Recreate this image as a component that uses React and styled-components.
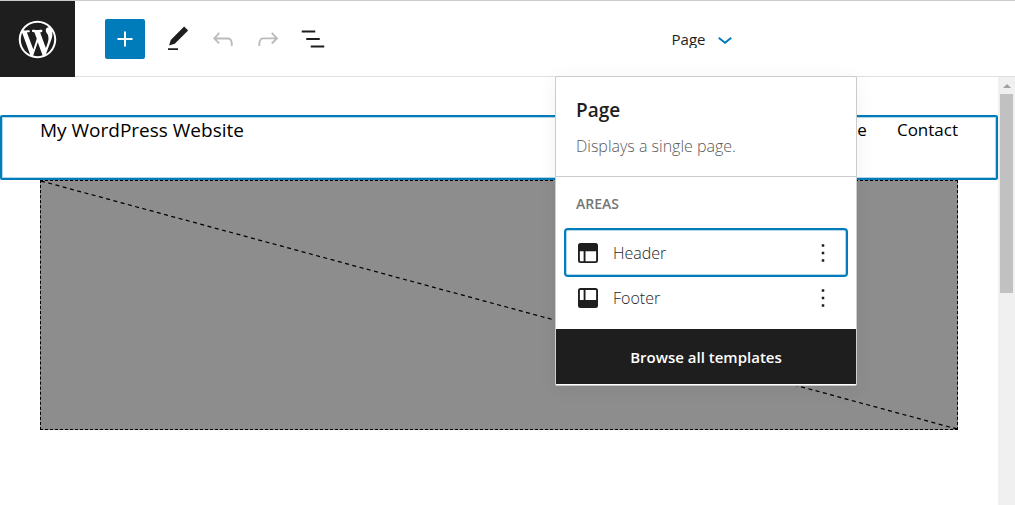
import React from 'react';

// UI
import styled, { createGlobalStyle } from 'styled-components';

const GlobalStyle = createGlobalStyle`
    *, *::before, *::after {
        box-sizing: border-box;
    }
    body {
        margin: 0;
        background: #fff;
        color: #1e1e1e;
        font-family: "Open Sans", "Noto Sans", sans-serif;
        font-size: 15px;
        line-height: 20px;
    }
    button {
        border: 0;
        padding: 0;
        background: none;
        color: inherit;
        font: inherit;
        cursor: pointer;
    }
`;

const Editor = styled.div`
    min-height: 100vh;
    display: flex;
    flex-direction: column;
    border-top: 1px solid #ccc;
`;

const TopBar = styled.header`
    display: flex;
    height: 76px;
    background: linear-gradient(#e0e0e0, #e0e0e0) bottom / 100% 1px no-repeat;
`;

const Logo = styled.a`
    display: flex;
    align-items: center;
    justify-content: center;
    width: 75px;
    background: #1e1e1e;
    color: #fff;
`;

const Tools = styled.div`
    display: flex;
    align-items: center;
    gap: 5px;
    width: 322px;
    padding-left: 30px;
`;

const ToolButton = styled.button`
    display: flex;
    align-items: center;
    justify-content: center;
    width: 40px;
    height: 40px;
    border-radius: 2px;
    &:disabled {
        color: #bbb;
        cursor: default;
    }
`;

const InserterButton = styled(ToolButton)`
    margin-right: 8px;
    background: #007cba;
    color: #fff;
`;

const DocumentActions = styled.div`
    flex: 1;
    display: flex;
    justify-content: center;
    position: relative;
`;

const DocumentButton = styled.button`
    display: flex;
    align-items: center;
    gap: 5px;
    svg {
        color: #007cba;
    }
`;

const DocumentLabel = styled.span`
    height: 18px;
    line-height: 18px;
    overflow: hidden;
`;

// Template details
const Popover = styled.div`
    position: absolute;
    top: 75px;
    left: 50%;
    z-index: 1;
    width: 302px;
    margin-left: -151px;
    padding-bottom: 1px;
    background: #fff;
    border: 1px solid #ccc;
    border-radius: 2px;
    box-shadow: 0 3px 20px rgba(0,0,0,.06);
`;

const Summary = styled.div`
    padding: 20px;
    border-bottom: 1px solid #ccc;
`;

const Title = styled.h2`
    margin: 0 0 12px;
    font-size: 19px;
    font-weight: 600;
    line-height: 27px;
`;

const Description = styled.p`
    margin: 0;
    color: #5a5a5a;
    font-size: 16px;
    font-weight: 300;
`;

const Areas = styled.div`
    padding: 17px 10px 9px;
`;

const AreasTitle = styled.h3`
    margin: 0 10px 16px;
    color: #757575;
    font-size: 14px;
    font-weight: 600;
    line-height: 20px;
    text-transform: uppercase;
`;

const Area = styled.div`
    display: flex;
    align-items: center;
    height: 45px;
    padding: 0 8px 0 7px;
    border-radius: 2px;
    box-shadow: ${props => props.$selected ? '0 0 0 2px #007cba, inset 0 0 0 1px rgba(0,124,186,.3)' : 'none'};
`;

const AreaButton = styled.button`
    flex: 1;
    display: flex;
    align-items: center;
    gap: 10px;
    height: 100%;
    font-size: 16px;
    font-weight: 300;
`;

const MoreButton = styled.button`
    display: flex;
`;

const BrowseButton = styled.button`
    display: block;
    width: 100%;
    height: 55px;
    background: #1e1e1e;
    color: #fff;
    font-weight: 600;
`;

// Canvas
const CanvasArea = styled.div`
    flex: 1;
    display: flex;
`;

const Canvas = styled.main`
    flex: 1;
    padding: 38px 0 74px;
    color: #000;
`;

const SiteHeader = styled.section`
    display: flex;
    justify-content: space-between;
    min-height: 65px;
    padding: 0 38px;
    border: 2px solid #007cba;
    border-radius: 2px;
    box-shadow: inset 0 0 0 1px rgba(0,124,186,.3);
`;

const SiteTitle = styled.h1`
    margin: 0;
    font-size: 19px;
    font-weight: 400;
    line-height: 26px;
`;

const SiteNav = styled.nav`
    display: flex;
    gap: 30px;
    font-size: 17px;
    line-height: 26px;
    a {
        color: inherit;
        text-decoration: none;
    }
`;

const Placeholder = styled.div`
    height: 250px;
    margin: 0 40px;
    background: #8d8d8d;
    border: 1px dashed #000;
    svg {
        display: block;
        width: 100%;
        height: 100%;
    }
`;

const Scrollbar = styled.div`
    width: 17px;
    padding: 0 2px;
    background: #f0f0f0;
`;

const ScrollArrow = styled.div`
    height: 17px;
    display: flex;
    align-items: center;
    justify-content: center;
    &::before {
        content: '';
        border: 4px solid transparent;
        border-top: 0;
        border-bottom-color: #a0a0a0;
    }
`;

const ScrollThumb = styled.div`
    height: 199px;
    background: #c1c1c1;
`;

const icons = {
    plus: 'M18 11.2h-5.2V6h-1.6v5.2H6v1.6h5.2V18h1.6v-5.2H18z',
    edit: 'M20.1 5.1L16.9 2 6.2 12.7l-1.3 4.4 4.5-1.3L20.1 5.1zM4 20.8h8v-1.5H4v1.5z',
    undo: 'M18.3 11.7c-.6-.6-1.4-.9-2.3-.9H6.7l2.9-3.3-1.1-1-4.5 5L8.5 16l1-1-2.7-2.7H16c.5 0 .9.2 1.3.5 1 1 1 3.4 1 4.5v.3h1.5v-.2c0-1.5 0-4.3-1.5-5.7z',
    redo: 'M15.6 6.5l-1.1 1 2.9 3.3H8c-.9 0-1.7.3-2.3.9-1.4 1.5-1.4 4.2-1.4 5.6v.2h1.5v-.3c0-1.1 0-3.5 1-4.5.3-.3.7-.5 1.3-.5h9.2L14.5 15l1.1 1.1 4.6-4.6-4.6-5z',
    listView: 'M13.8 5.2H3v1.5h10.8V5.2zm-3.6 12v1.5H21v-1.5H10.2zm7.2-6H6.6v1.5h10.8v-1.5z',
    chevron: 'M17.5 11.6L12 16l-5.5-4.4.9-1.2L12 14l4.5-3.6 1 1.2z',
    header: 'M18.5 10.5H10v8h8a.5.5 0 00.5-.5v-7.5zm-10 0h-3V18a.5.5 0 00.5.5h2.5v-8zM6 4h12a2 2 0 012 2v12a2 2 0 01-2 2H6a2 2 0 01-2-2V6a2 2 0 012-2z',
    footer: 'M18 5.5h-8v8h8.5V6a.5.5 0 00-.5-.5zm-9.5 8v-8H6a.5.5 0 00-.5.5v7.5h3zM6 4h12a2 2 0 012 2v12a2 2 0 01-2 2H6a2 2 0 01-2-2V6a2 2 0 012-2z',
    more: 'M13 19h-2v-2h2v2zm0-6h-2v-2h2v2zm0-6h-2V5h2v2z',
};

const Icon = ({ name }) => (
    <svg width="30" height="30" viewBox="0 0 24 24" fill="currentColor" aria-hidden="true">
        <path fillRule="evenodd" clipRule="evenodd" d={icons[name]} />
    </svg>
);

const WordPressLogo = () => (
    <svg width="45" height="45" viewBox="-2 -2 24 24" fill="currentColor" aria-hidden="true">
        <path d="M20 10c0-5.51-4.49-10-10-10C4.48 0 0 4.49 0 10c0 5.52 4.48 10 10 10 5.51 0 10-4.48 10-10zM7.78 15.37L4.37 6.22c.55-.02 1.17-.08 1.17-.08.5-.06.44-1.13-.06-1.11 0 0-1.45.11-2.37.11-.18 0-.37 0-.58-.01C4.12 2.69 6.87 1.11 10 1.11c2.33 0 4.45.87 6.05 2.34-.68-.11-1.65.39-1.65 1.58 0 .74.45 1.36.9 2.1.35.61.55 1.36.55 2.46 0 1.49-1.4 5-1.4 5l-3.03-8.37c.54-.02.82-.17.82-.17.5-.05.44-1.25-.06-1.22 0 0-1.44.12-2.38.12-.87 0-2.33-.12-2.33-.12-.5-.03-.56 1.2-.06 1.22l.92.08 1.26 3.41zM17.41 10c.24-.64.74-1.87.43-4.25.7 1.29 1.05 2.71 1.05 4.25 0 3.29-1.73 6.24-4.4 7.78.97-2.59 1.94-5.2 2.92-7.78zM6.1 18.09C3.12 16.65 1.11 13.53 1.11 10c0-1.3.23-2.48.72-3.59C3.25 10.3 4.67 14.2 6.1 18.09zm4.03-6.63l2.58 6.98c-.86.29-1.76.45-2.71.45-.79 0-1.57-.11-2.29-.33.81-2.38 1.62-4.74 2.42-7.1z" />
    </svg>
);

const TemplateArea = ({ name, icon, selected }) => (
    <Area $selected={selected}>
        <AreaButton>
            <Icon name={icon} />
            {name}
        </AreaButton>
        <MoreButton aria-label={`More options for ${name}`}><Icon name="more" /></MoreButton>
    </Area>
);

const App = () => {
    return (
        <Editor>
            <GlobalStyle />
            <TopBar>
                <Logo href="#" aria-label="Dashboard"><WordPressLogo /></Logo>
                <Tools>
                    <InserterButton aria-label="Add block"><Icon name="plus" /></InserterButton>
                    <ToolButton aria-label="Edit"><Icon name="edit" /></ToolButton>
                    <ToolButton aria-label="Undo" disabled><Icon name="undo" /></ToolButton>
                    <ToolButton aria-label="Redo" disabled><Icon name="redo" /></ToolButton>
                    <ToolButton aria-label="List view"><Icon name="listView" /></ToolButton>
                </Tools>
                <DocumentActions>
                    <DocumentButton aria-expanded="true">
                        <DocumentLabel>Page</DocumentLabel>
                        <Icon name="chevron" />
                    </DocumentButton>
                    <Popover>
                        <Summary>
                            <Title>Page</Title>
                            <Description>Displays a single page.</Description>
                        </Summary>
                        <Areas>
                            <AreasTitle>Areas</AreasTitle>
                            <TemplateArea name="Header" icon="header" selected />
                            <TemplateArea name="Footer" icon="footer" />
                        </Areas>
                        <BrowseButton>Browse all templates</BrowseButton>
                    </Popover>
                </DocumentActions>
            </TopBar>
            <CanvasArea>
                <Canvas>
                    <SiteHeader>
                        <SiteTitle>My WordPress Website</SiteTitle>
                        <SiteNav>
                            <a href="#">Home</a>
                            <a href="#">Contact</a>
                        </SiteNav>
                    </SiteHeader>
                    <Placeholder>
                        <svg aria-hidden="true">
                            <line x1="0" y1="0" x2="100%" y2="100%" stroke="#000" strokeWidth="1.25" strokeDasharray="4 3.5" />
                        </svg>
                    </Placeholder>
                </Canvas>
                <Scrollbar>
                    <ScrollArrow />
                    <ScrollThumb />
                </Scrollbar>
            </CanvasArea>
        </Editor>
    );
}

export default App;
